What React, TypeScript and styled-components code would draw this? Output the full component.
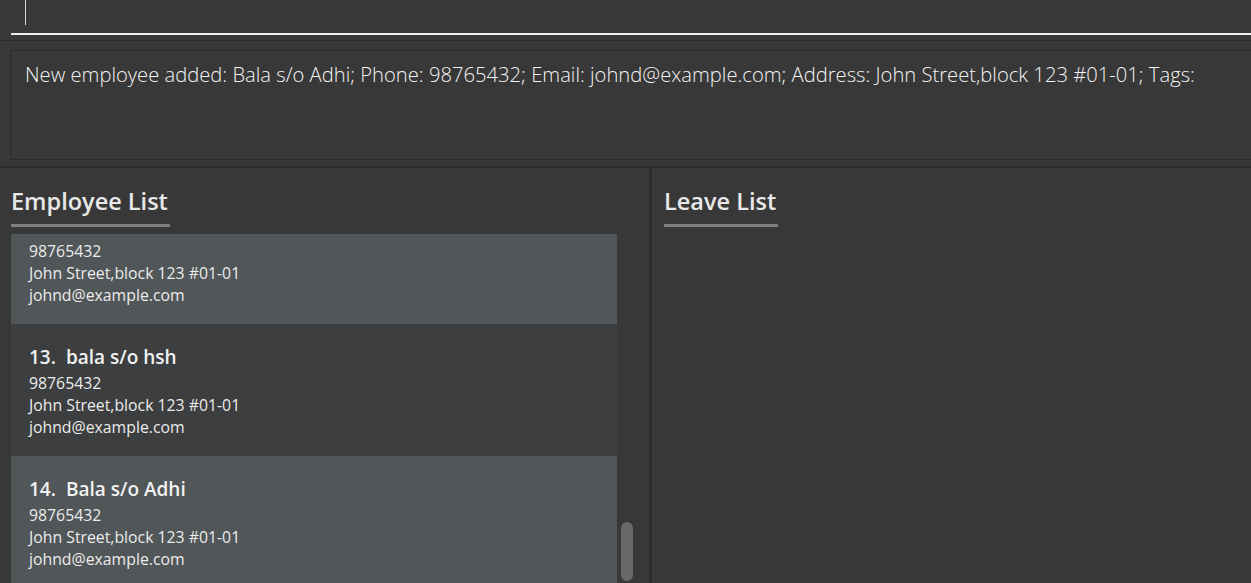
import styled, { createGlobalStyle } from "styled-components";

const colors = {
  bg: "#383838",
  line: "#2b2b2b",
  cardLight: "#515658",
  cardDark: "#3c3e3f",
  text: "#ffffff",
  soft: "#e8e8e8",
  underline: "#7f7f7f",
  thumb: "#686868",
};

const GlobalStyle = createGlobalStyle`
  html, body {
    margin: 0;
    background: ${colors.bg};
    overflow: hidden;
  }
  * { box-sizing: border-box; }
`;

const Shell = styled.div`
  height: 583px;
  display: flex;
  flex-direction: column;
  font-family: "Open Sans", "Noto Sans", sans-serif;
  color: ${colors.text};
  background: ${colors.bg};
`;

const CommandBar = styled.div`
  height: 41px;
  padding: 0 0 0 11px;
  border-bottom: 1px solid ${colors.line};
`;

const CommandField = styled.div`
  height: 35px;
  border-bottom: 2px solid #f0f0f0;
  padding-left: 14px;
`;

const Caret = styled.span`
  display: block;
  width: 1px;
  height: 25px;
  background: #d8d8d8;
`;

const ResultPane = styled.div`
  padding: 9px 0 6px 10px;
  border-bottom: 2px solid ${colors.line};
`;

const ResultBox = styled.div`
  height: 110px;
  border: 1px solid ${colors.line};
  border-right: none;
  padding: 9px 14px;
  font-size: 20.2px;
  font-weight: 300;
  white-space: nowrap;
  color: #f4f4f4;
`;

const Split = styled.div`
  flex: 1;
  display: grid;
  grid-template-columns: 649px 3px 1fr;
  min-height: 0;
`;

const Divider = styled.div`
  background: ${colors.line};
`;

const Panel = styled.section<{ $left: number }>`
  display: flex;
  flex-direction: column;
  padding: 18px 0 0 ${(p) => p.$left}px;
  min-height: 0;
`;

const Heading = styled.h2`
  align-self: flex-start;
  margin: 0;
  font-size: 23.5px;
  font-weight: 600;
  color: ${colors.soft};
  line-height: 30px;
  padding: 0 2px 8px 0;
  border-bottom: 3px solid ${colors.underline};
`;

const ListArea = styled.div`
  margin-top: 7px;
  flex: 1;
  display: flex;
  min-height: 0;
  width: 625px;
`;

const Viewport = styled.div`
  flex: 1;
  overflow: hidden;
`;

const Track = styled.div`
  width: 19px;
  display: flex;
  flex-direction: column;
  justify-content: flex-end;
  padding: 0 3px 2px 4px;
`;

const Thumb = styled.div`
  height: 59px;
  border-radius: 6px;
  background: ${colors.thumb};
`;

const Stack = styled.div<{ $offset: number }>`
  margin-top: ${(p) => -p.$offset}px;
`;

const Card = styled.div<{ $odd: boolean }>`
  height: 132px;
  padding: 20px 0 0 18px;
  background: ${(p) => (p.$odd ? colors.cardDark : colors.cardLight)};
`;

const NameRow = styled.div`
  display: flex;
  gap: 10px;
  font-size: 19px;
  font-weight: 600;
  line-height: 26px;
  color: #f2f2f2;
  margin-bottom: 2px;
`;

const Detail = styled.div`
  font-size: 15.8px;
  line-height: 22px;
  color: #ececec;
`;

const employees = [
  { id: 12, name: "Bala s/o Adhi" },
  { id: 13, name: "bala s/o hsh" },
  { id: 14, name: "Bala s/o Adhi" },
];

export default function App() {
  return (
    <Shell>
      <GlobalStyle />
      <CommandBar>
        <CommandField>
          <Caret />
        </CommandField>
      </CommandBar>
      <ResultPane>
        <ResultBox>
          New employee added: Bala s/o Adhi; Phone: 98765432; Email:
          johnd@example.com; Address: John Street,block 123 #01-01; Tags:
        </ResultBox>
      </ResultPane>
      <Split>
        <Panel $left={11}>
          <Heading>Employee List</Heading>
          <ListArea>
            <Viewport>
              <Stack $offset={42}>
                {employees.map((e) => (
                  <Card key={e.id} $odd={e.id % 2 === 1}>
                    <NameRow>
                      <span>{e.id}.</span>
                      <span>{e.name}</span>
                    </NameRow>
                    <Detail>98765432</Detail>
                    <Detail>John Street,block 123 #01-01</Detail>
                    <Detail>johnd@example.com</Detail>
                  </Card>
                ))}
              </Stack>
            </Viewport>
            <Track>
              <Thumb />
            </Track>
          </ListArea>
        </Panel>
        <Divider />
        <Panel $left={12}>
          <Heading>Leave List</Heading>
        </Panel>
      </Split>
    </Shell>
  );
}
